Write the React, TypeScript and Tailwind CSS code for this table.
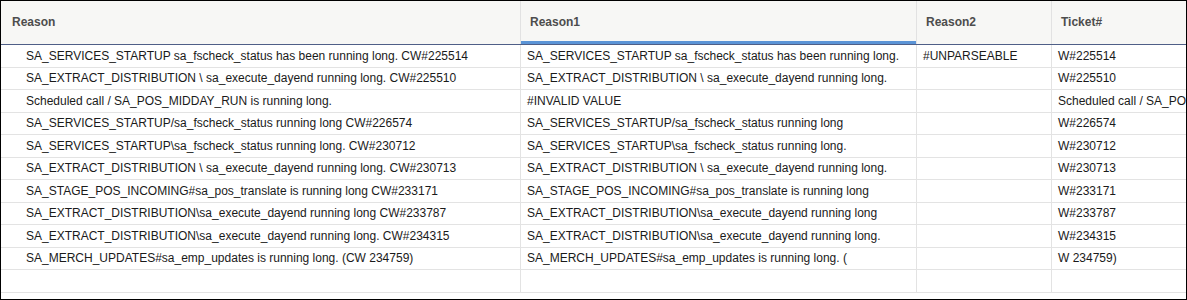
import React from 'react';

const rows: string[][] = [
    ['SA_SERVICES_STARTUP sa_fscheck_status has been running long. CW#225514', 'SA_SERVICES_STARTUP sa_fscheck_status has been running long.', '#UNPARSEABLE', 'W#225514'],
    ['SA_EXTRACT_DISTRIBUTION \\ sa_execute_dayend running long. CW#225510', 'SA_EXTRACT_DISTRIBUTION \\ sa_execute_dayend running long.', '', 'W#225510'],
    ['Scheduled call / SA_POS_MIDDAY_RUN is running long.', '#INVALID VALUE', '', 'Scheduled call / SA_POS_MIDDAY_RUN is running long.'],
    ['SA_SERVICES_STARTUP/sa_fscheck_status running long CW#226574', 'SA_SERVICES_STARTUP/sa_fscheck_status running long', '', 'W#226574'],
    ['SA_SERVICES_STARTUP\\sa_fscheck_status running long. CW#230712', 'SA_SERVICES_STARTUP\\sa_fscheck_status running long.', '', 'W#230712'],
    ['SA_EXTRACT_DISTRIBUTION \\ sa_execute_dayend running long. CW#230713', 'SA_EXTRACT_DISTRIBUTION \\ sa_execute_dayend running long.', '', 'W#230713'],
    ['SA_STAGE_POS_INCOMING#sa_pos_translate is running long CW#233171', 'SA_STAGE_POS_INCOMING#sa_pos_translate is running long', '', 'W#233171'],
    ['SA_EXTRACT_DISTRIBUTION\\sa_execute_dayend running long CW#233787', 'SA_EXTRACT_DISTRIBUTION\\sa_execute_dayend running long', '', 'W#233787'],
    ['SA_EXTRACT_DISTRIBUTION\\sa_execute_dayend running long. CW#234315', 'SA_EXTRACT_DISTRIBUTION\\sa_execute_dayend running long.', '', 'W#234315'],
    ['SA_MERCH_UPDATES#sa_emp_updates is running long. (CW 234759)', 'SA_MERCH_UPDATES#sa_emp_updates is running long. (', '', 'W 234759)'],
    ['', '', '', ''],
];

const colWidths = ['w-[520px]', 'w-[396px]', 'w-[135px]', 'w-[200px]'];
const headers = ['Reason', 'Reason1', 'Reason2', 'Ticket#'];

export default function App() {
    return (
        <div
            className="w-[1187px] h-[300px] border border-black bg-white overflow-hidden"
            style={{ fontFamily: '"Liberation Sans", Arial, sans-serif' }}
        >
            {/* Header */}
            <div className="flex h-[44px] bg-[#f7f7f5] border-b border-[#4f5f87]">
                {headers.map((h, i) => (
                    <div
                        key={h}
                        className={`relative shrink-0 ${colWidths[i]} ${i < 3 ? 'border-r border-[#e2e2e2]' : ''} ${i === 0 ? 'pl-[11px]' : 'pl-[9px]'} pt-[12px] text-[12px] font-bold text-[#4d4d4d]`}
                    >
                        {h}
                        {i === 1 && (
                            <div className="absolute left-0 right-0 bottom-0 h-[3px] bg-[#5b94d6]" />
                        )}
                    </div>
                ))}
            </div>

            {/* Rows */}
            {rows.map((r, ri) => (
                <div key={ri} className="flex h-[22.5px] border-b border-[#e3e3e3] text-[12px] text-[#1a1a1a]">
                    {r.map((c, ci) => (
                        <div
                            key={ci}
                            className={`shrink-0 ${colWidths[ci]} ${ci < 3 ? 'border-r border-[#e3e3e3]' : ''} ${ci === 0 ? 'pl-[25px]' : 'pl-[6px]'} flex items-center whitespace-nowrap overflow-hidden`}
                        >
                            {c}
                        </div>
                    ))}
                </div>
            ))}
        </div>
    );
}
